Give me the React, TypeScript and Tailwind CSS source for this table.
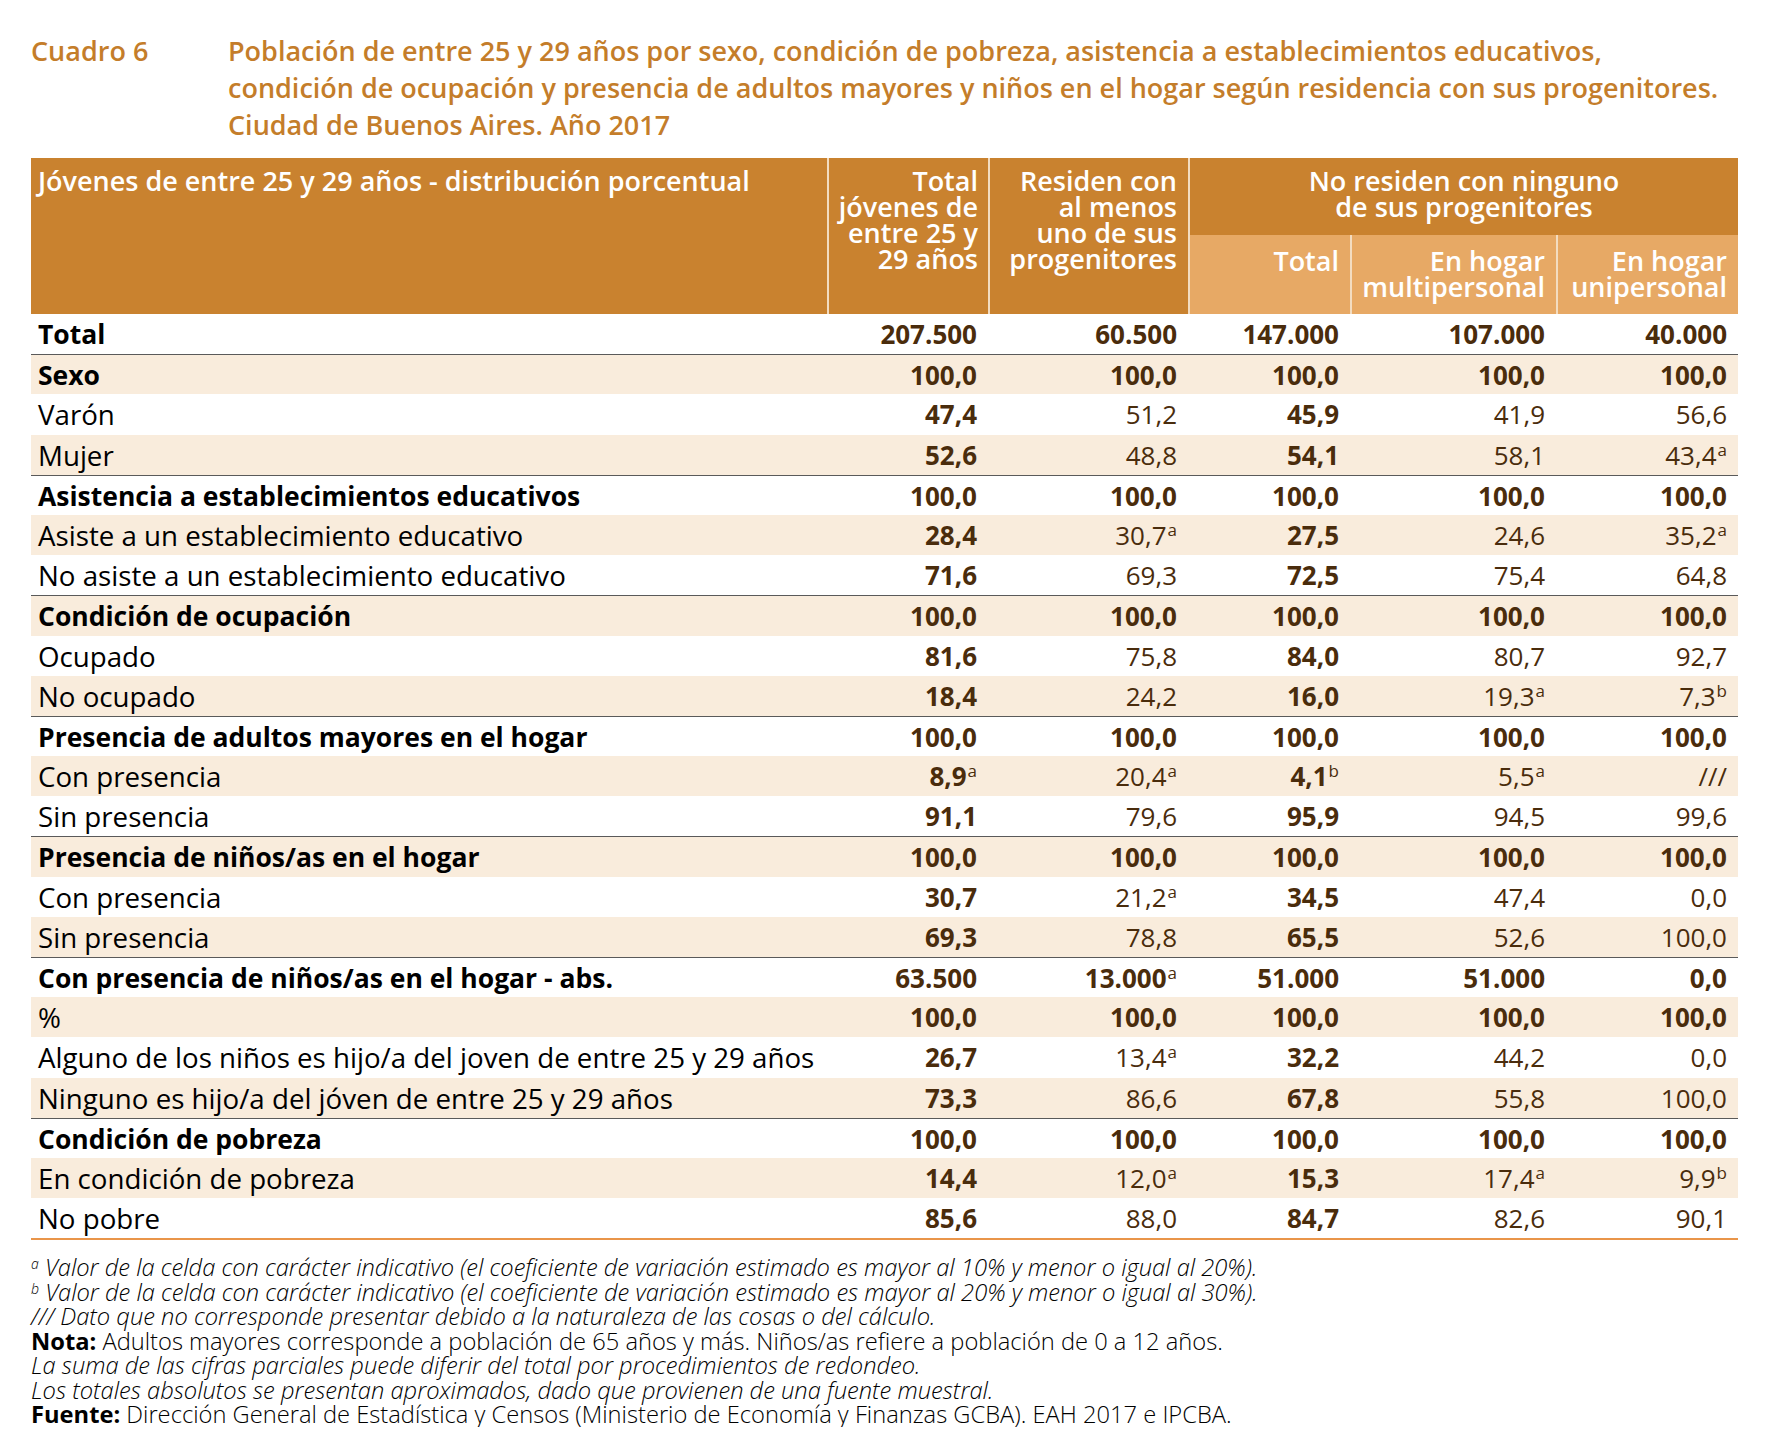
import React from "react"

type Row = {
  label: string
  head?: boolean
  boldLabel?: boolean
  sep?: boolean
  v: string[]
}

const H = ["100,0", "100,0", "100,0", "100,0", "100,0"]

const rows: Row[] = [
  { label: "Total", head: true, v: ["207.500", "60.500", "147.000", "107.000", "40.000"] },
  { label: "Sexo", head: true, sep: true, v: H },
  { label: "Varón", v: ["47,4", "51,2", "45,9", "41,9", "56,6"] },
  { label: "Mujer", v: ["52,6", "48,8", "54,1", "58,1", "43,4|a"] },
  { label: "Asistencia a establecimientos educativos", head: true, sep: true, v: H },
  { label: "Asiste a un establecimiento educativo", v: ["28,4", "30,7|a", "27,5", "24,6", "35,2|a"] },
  { label: "No asiste a un establecimiento educativo", v: ["71,6", "69,3", "72,5", "75,4", "64,8"] },
  { label: "Condición de ocupación", head: true, sep: true, v: H },
  { label: "Ocupado", v: ["81,6", "75,8", "84,0", "80,7", "92,7"] },
  { label: "No ocupado", v: ["18,4", "24,2", "16,0", "19,3|a", "7,3|b"] },
  { label: "Presencia de adultos mayores en el hogar", head: true, sep: true, v: H },
  { label: "Con presencia", v: ["8,9|a", "20,4|a", "4,1|b", "5,5|a", "///"] },
  { label: "Sin presencia", v: ["91,1", "79,6", "95,9", "94,5", "99,6"] },
  { label: "Presencia de niños/as en el hogar", head: true, sep: true, v: H },
  { label: "Con presencia", v: ["30,7", "21,2|a", "34,5", "47,4", "0,0"] },
  { label: "Sin presencia", v: ["69,3", "78,8", "65,5", "52,6", "100,0"] },
  { label: "Con presencia de niños/as en el hogar - abs.", head: true, sep: true, v: ["63.500", "13.000|a", "51.000", "51.000", "0,0"] },
  { label: "%", head: true, boldLabel: false, v: H },
  { label: "Alguno de los niños es hijo/a del joven de entre 25 y 29 años", v: ["26,7", "13,4|a", "32,2", "44,2", "0,0"] },
  { label: "Ninguno es hijo/a del jóven de entre 25 y 29 años", v: ["73,3", "86,6", "67,8", "55,8", "100,0"] },
  { label: "Condición de pobreza", head: true, sep: true, v: H },
  { label: "En condición de pobreza", v: ["14,4", "12,0|a", "15,3", "17,4|a", "9,9|b"] },
  { label: "No pobre", v: ["85,6", "88,0", "84,7", "82,6", "90,1"] },
]

const grid = "grid grid-cols-[796px_161px_200px_162px_206px_182px]"

function Value({ text, bold }: { text: string; bold: boolean }) {
  const [num, sup] = text.split("|")
  return (
    <div className={`flex items-center justify-end pr-[11px] text-[26px] text-[#4a2c0c] ${bold ? "font-bold" : "font-normal"}`}>
      <span>{num}</span>
      {sup && <span className="self-start mt-[6px] ml-[1px] text-[17px] leading-none font-normal">{sup}</span>}
    </div>
  )
}

export default function App() {
  return (
    <div className="w-[1776px] bg-white font-['Open_Sans','Noto_Sans',sans-serif] text-black">
      {/* title */}
      <div className="flex pl-[31px] pt-[32px] text-[27px] leading-[37px] font-semibold text-[#c47d2a]">
        <div className="w-[197px] shrink-0">Cuadro 6</div>
        <div>
          Población de entre 25 y 29 años por sexo, condición de pobreza, asistencia a establecimientos educativos,
          <br />
          condición de ocupación y presencia de adultos mayores y niños en el hogar según residencia con sus progenitores.
          <br />
          Ciudad de Buenos Aires. Año 2017
        </div>
      </div>

      <div className="ml-[31px] mt-[15px] w-[1707px]">
        {/* header */}
        <div className={`${grid} grid-rows-[77px_79px] text-white font-semibold text-[27px] leading-[26px] whitespace-nowrap`}>
          <div className="row-span-2 bg-[#c9822f] pl-[7px] pt-[10px]">Jóvenes de entre 25 y 29 años - distribución porcentual</div>
          <div className="row-span-2 bg-[#c9822f] border-l-2 border-[#f3dcc0] pr-[10px] pt-[10px] text-right">
            Total
            <br />
            jóvenes de
            <br />
            entre 25 y
            <br />
            29 años
          </div>
          <div className="row-span-2 bg-[#c9822f] border-l-2 border-[#f3dcc0] pr-[11px] pt-[10px] text-right">
            Residen con
            <br />
            al menos
            <br />
            uno de sus
            <br />
            progenitores
          </div>
          <div className="col-span-3 bg-[#c9822f] border-l-2 border-[#f3dcc0] pt-[10px] text-center">
            No residen con ninguno
            <br />
            de sus progenitores
          </div>
          <div className="bg-[#e7a965] border-l-2 border-[#f3dcc0] pr-[11px] pt-[13px] text-right">Total</div>
          <div className="bg-[#e7a965] border-l-2 border-[#f3dcc0] pr-[11px] pt-[13px] text-right">
            En hogar
            <br />
            multipersonal
          </div>
          <div className="bg-[#e7a965] border-l-2 border-[#f3dcc0] pr-[11px] pt-[13px] text-right">
            En hogar
            <br />
            unipersonal
          </div>
        </div>

        {/* body */}
        <div className="border-b-2 border-[#e9954a]">
          {rows.map((r, i) => (
            <div
              key={i}
              className={`${grid} h-[40.2px] items-center leading-[40px] ${i % 2 === 1 ? "bg-[#f9ecdc]" : "bg-white"} ${
                r.sep ? "border-t-[1.5px] border-[#5a5a5a]" : ""
              }`}
            >
              <div
                className={`pl-[7px] whitespace-nowrap ${
                  r.head && r.boldLabel !== false ? "font-bold text-[26.5px]" : "font-normal text-[27.7px]"
                }`}
              >
                {r.label}
              </div>
              {r.v.map((t, j) => (
                <Value key={j} text={t} bold={!!r.head || j === 0 || j === 2} />
              ))}
            </div>
          ))}
        </div>

        {/* notes */}
        <div className="mt-[15px] text-[23.7px] leading-[24.5px] font-light">
          <div className="italic">
            <sup className="text-[14px]">a</sup> Valor de la celda con carácter indicativo (el coeficiente de variación estimado es mayor al 10% y menor o igual al 20%).
          </div>
          <div className="italic">
            <sup className="text-[14px]">b</sup> Valor de la celda con carácter indicativo (el coeficiente de variación estimado es mayor al 20% y menor o igual al 30%).
          </div>
          <div className="italic">/// Dato que no corresponde presentar debido a la naturaleza de las cosas o del cálculo.</div>
          <div>
            <span className="font-bold">Nota:</span> Adultos mayores corresponde a población de 65 años y más. Niños/as refiere a población de 0 a 12 años.
          </div>
          <div className="italic">La suma de las cifras parciales puede diferir del total por procedimientos de redondeo.</div>
          <div className="italic">Los totales absolutos se presentan aproximados, dado que provienen de una fuente muestral.</div>
          <div>
            <span className="font-bold">Fuente:</span> Dirección General de Estadística y Censos (Ministerio de Economía y Finanzas GCBA). EAH 2017 e IPCBA.
          </div>
        </div>
      </div>
    </div>
  )
}
